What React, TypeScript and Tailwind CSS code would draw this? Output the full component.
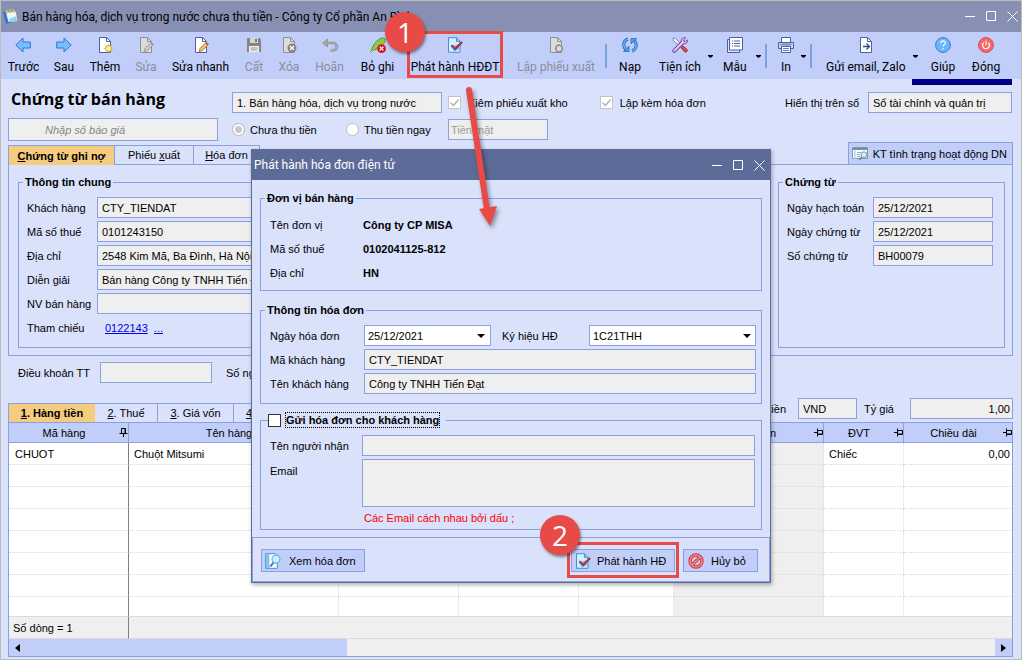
import type { ReactNode } from 'react';

const FIELD = 'h-[21px] rounded-none border border-[#8c9fdf] bg-[#efefef] px-1 text-black outline-none';
const LEGEND = 'ml-1 px-0.5 text-[11px] leading-4 font-bold';

function PageIcon({ muted, children }: { muted?: boolean; children?: ReactNode }) {
  return (
    <svg width="16" height="16" viewBox="0 0 16 16" fill="none" aria-hidden="true">
      <path
        d="M2.5.5h7l4 4v11h-11z"
        fill={muted ? '#dcdcdc' : '#fff'}
        stroke={muted ? '#8f8f8f' : '#4a5fa5'}
      />
      <path d="M9.5.5v4h4" stroke={muted ? '#8f8f8f' : '#4a5fa5'} />
      {children}
    </svg>
  );
}

function ArrowIcon({ flip }: { flip?: boolean }) {
  return (
    <svg width="16" height="16" viewBox="0 0 16 16" className={flip ? 'rotate-180' : ''} aria-hidden="true">
      <path d="M.8 8 8 1v4h7.3v6H8v4z" fill="#79bdff" stroke="#2a79d8" strokeLinejoin="round" />
    </svg>
  );
}

function AddIcon() {
  return (
    <PageIcon>
      <path d="M11.5 7.5v8M7.5 11.5h8M8.7 8.7l5.6 5.6M14.3 8.7l-5.6 5.6" stroke="#c79a1c" />
      <circle cx="11.5" cy="11.5" r="3" fill="#fff09a" stroke="#d5a51f" />
    </PageIcon>
  );
}

function EditIcon({ muted }: { muted?: boolean }) {
  return (
    <PageIcon muted={muted}>
      <path
        d="m6 14.8 1-3.3 6.2-6.2 2.2 2.2-6.2 6.2z"
        fill={muted ? '#c9c9c9' : '#f6c25b'}
        stroke={muted ? '#909090' : '#8f6a36'}
        strokeWidth=".8"
      />
      <path d="m12.3 6.2 1.1-1.1 2.2 2.2-1.1 1.1z" fill={muted ? '#999' : '#e0483e'} />
    </PageIcon>
  );
}

function SaveIcon() {
  return (
    <svg width="16" height="16" viewBox="0 0 16 16" aria-hidden="true">
      <path d="M1 1h12.5L15 2.5V15H1z" fill="#858585" />
      <path d="M4 1h8v5H4z" fill="#d6d6d6" />
      <path d="M9 2h2v3H9z" fill="#777" />
      <path d="M3 9h10v6H3z" fill="#efefef" />
      <path d="M4.5 11h7M4.5 13h7" stroke="#999" />
    </svg>
  );
}

function DeleteIcon() {
  return (
    <PageIcon muted>
      <circle cx="11" cy="11" r="4.5" fill="#858585" />
      <path d="m9 9 4 4M13 9l-4 4" stroke="#fff" strokeWidth="1.3" />
    </PageIcon>
  );
}

function UndoIcon() {
  return (
    <svg width="16" height="16" viewBox="0 0 16 16" fill="none" aria-hidden="true">
      <path d="M3.5 6H11a3.5 3.5 0 0 1 0 7.500H8.5" stroke="#8b8b8b" strokeWidth="2.6" />
      <path d="M3.5 6H11a3.5 3.5 0 0 1 0 7.500H8.5" stroke="#c4c4c4" strokeWidth=".8" />
      <path d="M5.5 2v8L.6 6z" fill="#a8a8a8" stroke="#8b8b8b" strokeWidth=".7" />
    </svg>
  );
}

function UnpostIcon() {
  return (
    <svg width="16" height="16" viewBox="0 0 16 16" aria-hidden="true">
      <path d="M.8 15 3 9.2C4.6 5.6 8 2 12.6.8l2.7 1.3c-.2 4-3.5 8.2-7.4 9.7L3 13.2z" fill="#8fd145" stroke="#4f9a1d" />
      <path d="M1 15 12.5 3" stroke="#4f9a1d" strokeWidth="1.8" />
      <path d="M1 15 12.5 3" stroke="#e9ffd0" strokeWidth=".8" />
      <circle cx="11.6" cy="11.6" r="4.4" fill="#dd1417" />
      <path d="m9.8 9.8 3.6 3.6M13.4 9.8l-3.6 3.6" stroke="#fff" strokeWidth="1.3" />
    </svg>
  );
}

function IssueIcon() {
  return (
    <svg width="16" height="16" viewBox="0 0 16 16" fill="none" aria-hidden="true">
      <path d="M1.5.7h8l3.5 3.6v11H1.5z" fill="#d3edff" stroke="#3b93d6" />
      <path d="M9.5.7v3.6H13" stroke="#3b93d6" fill="#8fc9f2" />
      <path d="M4 9.6 12 7v5l-5 3z" fill="#7fbdec" />
      <path d="m4.5 8.2 3.8 3.6L15 5" stroke="#8e2434" strokeWidth="2.2" />
      <path d="m5.2 8.4 3.1 2.8L14.300 5.200" stroke="#e8606c" strokeWidth=".8" />
    </svg>
  );
}

function StockIcon() {
  return (
    <PageIcon muted>
      <circle cx="11" cy="11.5" r="3.2" fill="#dcdcdc" stroke="#909090" strokeWidth="1.4" />
      <path d="M11 7v1.5M11 14.5V16M6.8 11.5h1.4M13.8 11.5h1.4" stroke="#909090" />
    </PageIcon>
  );
}

function ReloadIcon() {
  return (
    <svg width="16" height="16" viewBox="0 0 16 16" fill="none" aria-hidden="true">
      <path d="M6 2C1 3.5.5 10 4.5 13M10 14c5-1.5 5.5-8 1.5-11" stroke="#1f65c0" strokeWidth="3" />
      <path d="M6 2C1 3.5.5 10 4.5 13M10 14c5-1.5 5.5-8 1.5-11" stroke="#7dbcf7" strokeWidth="1.3" />
      <path d="M1.5 14.5H7V9zM14.5 1.5H9V7z" fill="#4d9cf0" stroke="#1f65c0" strokeWidth=".7" />
    </svg>
  );
}

function ToolsIcon() {
  return (
    <svg width="16" height="16" viewBox="0 0 16 16" fill="none" aria-hidden="true">
      <path d="M1 1.5 3 .8l6 6.400L7.500 8.700 1.300 3.500z" fill="#f1f2ff" stroke="#5a6fb4" strokeWidth=".8" />
      <path d="M2.300 13.800 11 5" stroke="#683d94" strokeWidth="4" strokeLinecap="round" />
      <path
        d="M13.500.8 11.400 3l.4 1.500 1.600.4 2-2.100c.8 2.600-1.500 4.700-3.900 3.700L9.400 4.800C8.500 2.300 11-.2 13.500.8z"
        fill="#e3d3f2"
        stroke="#683d94"
        strokeWidth=".9"
      />
      <path d="M2.300 13.800 11 5" stroke="#e3d3f2" strokeWidth="2" strokeLinecap="round" />
      <path d="m9 10.500 1.800-1.700 4.200 3.600c1 1.500-.8 3.500-2.400 2.500z" fill="#e34a50" stroke="#9b2030" strokeWidth=".9" />
    </svg>
  );
}

function TemplateIcon() {
  return (
    <svg width="16" height="16" viewBox="0 0 16 16" fill="none" aria-hidden="true">
      <path d="M.5 2.5h12v13H.5z" fill="#dbe3ff" stroke="#4a5fa5" />
      <path d="M2.5.5h13v12.5h-13z" fill="#fff" stroke="#4a5fa5" />
      <path d="M5 4h1M7 4h6M5 6.5h1M7 6.5h6M5 9h1M7 9h6" stroke="#4a5fa5" />
    </svg>
  );
}

function PrintIcon() {
  return (
    <svg width="16" height="16" viewBox="0 0 16 16" fill="none" aria-hidden="true">
      <path d="M3.5.5h9v5h-9z" fill="#fff" stroke="#4a5fa5" />
      <path d="M.5 5.5h15v6H.5z" fill="#cbd4fa" stroke="#4a5fa5" />
      <path d="M2.5 6.5h11v2h-11z" fill="#7d8dcc" />
      <path d="M3.5 9.5h9v6h-9z" fill="#fff" stroke="#4a5fa5" />
      <path d="M5 11.5h6M5 13.5h6" stroke="#6677b8" />
    </svg>
  );
}

function SendIcon() {
  return (
    <PageIcon>
      <path d="M5 9.5h6M8.5 6.5l3 3-3 3" stroke="#33498f" strokeWidth="1.3" />
    </PageIcon>
  );
}

function HelpIcon() {
  return (
    <svg width="16" height="16" viewBox="0 0 16 16" fill="none" aria-hidden="true">
      <circle cx="8" cy="8" r="7.4" fill="#6db4fb" stroke="#2e7fd8" />
      <path d="M5.8 6.2c0-3 4.6-3 4.6-.3 0 1.700-2.300 1.700-2.300 3.700M8.100 11v1.500" stroke="#fff" strokeWidth="1.2" />
    </svg>
  );
}

function PowerIcon() {
  return (
    <svg width="16" height="16" viewBox="0 0 16 16" fill="none" aria-hidden="true">
      <circle cx="8" cy="8" r="7.4" fill="#f8696b" stroke="#d9444a" />
      <path d="M5.7 5.7a3.4 3.4 0 1 0 4.6 0M8 3.8v4.400" stroke="#fff" strokeWidth="1.2" />
    </svg>
  );
}

function PreviewIcon() {
  return (
    <svg width="16" height="16" viewBox="0 0 16 16" fill="none" aria-hidden="true">
      <path d="M.7.7h9.600l2 2v12.600H.7z" fill="#fff" stroke="#3b93d6" />
      <path d="M1 1h3.5v14H1z" fill="#86c3ee" />
      <path d="m8.5 9.5-3.2 4" stroke="#7658a8" strokeWidth="2" />
      <circle cx="11" cy="6.2" r="4" fill="#c9f1fb" stroke="#64b6dd" strokeWidth="1.2" />
    </svg>
  );
}

function CancelIcon() {
  return (
    <svg width="16" height="16" viewBox="0 0 16 16" fill="none" aria-hidden="true">
      <circle cx="8" cy="8" r="6" stroke="#cf3438" strokeWidth="3.4" />
      <path d="m3.8 12.2 8.4-8.4" stroke="#cf3438" strokeWidth="3.2" />
      <circle cx="8" cy="8" r="6" stroke="#f2898b" strokeWidth="1.6" />
      <path d="m3.8 12.2 8.4-8.4" stroke="#f2898b" strokeWidth="1.4" />
    </svg>
  );
}

function StatusIcon() {
  return (
    <svg width="17" height="14" viewBox="0 0 17 14" fill="none" aria-hidden="true">
      <path d="M.5.5h15v11H.5z" fill="#fff" stroke="#8792a2" />
      <path d="M1 1h14v2H1z" fill="#6f93a4" />
      <path d="M2 3.5h2v8H2z" fill="#bfe0f5" />
      <path d="M5 5.5h4M5 7.5h3M5 9.5h3" stroke="#7db0d8" />
      <path d="m9.5 10-2 3" stroke="#8a8a8a" strokeWidth="2" />
      <circle cx="12" cy="7.8" r="3" fill="#cdeaf8" stroke="#6b9fc0" />
    </svg>
  );
}

function AppIcon() {
  return (
    <svg width="15" height="16" viewBox="0 0 15 16" aria-hidden="true">
      <path d="M0 3.5 10 2l2.500 10L3 15z" fill="#3873d6" />
      <path d="M3 3.500 12.500 2.500 14.500 12 5.500 13z" fill="#eef7ff" />
      <path d="m6 10 7-3 1.200 5-8 1z" fill="#8ed2f3" />
      <path d="M4 1v4M7 .5v4M10 .5v3.500" stroke="#e8c948" strokeWidth="1.5" />
    </svg>
  );
}

function Caret() {
  return (
    <svg width="8" height="4" viewBox="0 0 8 4" className="shrink-0" aria-hidden="true">
      <path d="M0 0h8L4 4z" fill="#000" />
    </svg>
  );
}

function SmallCaret() {
  return (
    <svg width="5" height="3" viewBox="0 0 5 3" className="mt-px shrink-0" aria-hidden="true">
      <path d="M0 0h5v1L2.500 3 0 1z" fill="#000" />
    </svg>
  );
}

function PinIcon({ upright }: { upright?: boolean }) {
  return (
    <svg width="9" height="9" viewBox="0 0 9 9" fill="none" className={upright ? '-rotate-90' : ''} aria-hidden="true">
      <path d="M0 4.5h3M3.5.5v8M3.5 2.5h5v4h-5M4 6h4" stroke="#000" />
    </svg>
  );
}

function WindowButtons() {
  return (
    <div className="ml-auto flex gap-[10px] text-white">
      <button type="button" aria-label="Thu nhỏ">
        <svg width="11" height="11" viewBox="0 0 11 11"><path d="M0 5.5h10" stroke="currentColor" /></svg>
      </button>
      <button type="button" aria-label="Phóng to">
        <svg width="11" height="11" viewBox="0 0 11 11" fill="none"><path d="M.5.5h9v9h-9z" stroke="currentColor" /></svg>
      </button>
      <button type="button" aria-label="Đóng cửa sổ">
        <svg width="11" height="11" viewBox="0 0 11 11"><path d="m.5.5 10 10M10.5.5l-10 10" stroke="currentColor" /></svg>
      </button>
    </div>
  );
}

interface ToolProps {
  icon: ReactNode;
  label: string;
  size: string;
  disabled?: boolean;
  menu?: boolean;
  children?: ReactNode;
}

function Tool({ icon, label, size, disabled, menu, children }: ToolProps) {
  return (
    <button
      type="button"
      disabled={disabled}
      className={`relative flex h-[47px] shrink-0 items-center disabled:text-[#8b8d9b] ${menu ? 'justify-between' : 'justify-center'} ${size}`}
    >
      <span className="flex flex-col items-center gap-1.5 whitespace-nowrap">
        {icon}
        <span className="leading-4">{label}</span>
      </span>
      {menu && <SmallCaret />}
      {children}
    </button>
  );
}

function Divider() {
  return <span className="h-6 w-0.5 shrink-0 bg-[#7ba3df]" />;
}

function Step({ n, place }: { n: number; place: string }) {
  return (
    <span
      className={`absolute flex size-10 items-center justify-center rounded-full bg-[#e84a48] font-['Open_Sans',sans-serif] text-[28px] leading-none text-white shadow-[1px_2px_3px_rgba(0,0,0,0.45)] ${place}`}
    >
      {n}
    </span>
  );
}

function Check({ label }: { label: string }) {
  return (
    <label className="flex items-center gap-[7px] whitespace-nowrap">
      <span className="relative flex">
        <input type="checkbox" defaultChecked disabled className="size-[13px] appearance-none border border-[#c4c4c4] bg-white" />
        <svg width="13" height="13" viewBox="0 0 13 13" fill="none" className="absolute inset-0">
          <path d="m2.5 6.5 3 3 5-6" stroke="#b0b0b0" strokeWidth="1.3" />
        </svg>
      </span>
      {label}
    </label>
  );
}

function Radio({ label, checked }: { label: string; checked?: boolean }) {
  return (
    <label className="flex items-center gap-[5px] whitespace-nowrap">
      <input
        type="radio"
        name="thanhToan"
        defaultChecked={checked}
        disabled
        className="size-[13px] appearance-none rounded-full border border-[#bdbdbd] bg-white checked:bg-[#c8c8c8] checked:shadow-[inset_0_0_0_2px_#fff]"
      />
      {label}
    </label>
  );
}

const thongTinChung = [
  ['Khách hàng', 'CTY_TIENDAT'],
  ['Mã số thuế', '0101243150'],
  ['Địa chỉ', '2548 Kim Mã, Ba Đình, Hà Nội'],
  ['Diễn giải', 'Bán hàng Công ty TNHH Tiến Đạt'],
  ['NV bán hàng', ''],
];

const chungTu = [
  ['Ngày hạch toán', '25/12/2021'],
  ['Ngày chứng từ', '25/12/2021'],
  ['Số chứng từ', 'BH00079'],
];

const donVi = [
  ['Tên đơn vị', 'Công ty CP MISA'],
  ['Mã số thuế', '0102041125-812'],
  ['Địa chỉ', 'HN'],
];

const cot = ['Mã hàng', 'Tên hàng', 'Kho', 'TK công nợ', 'TK DT', 'Số lượng tồn', 'ĐVT', 'Chiều dài'];
const dong = ['CHUOT', 'Chuột Mitsumi', '', '', '', '', 'Chiếc', '0,00'];

function cellClass(i: number, last: boolean) {
  return [
    'border-r p-0',
    i === 0 ? 'border-r-[#808080] px-1.5' : 'border-r-[#d9d9d9] [border-right-style:dotted] px-[5px]',
    i === 5 ? 'bg-[#efefef]' : 'bg-white',
    i === 7 ? 'border-r-0 pr-0.5 text-right' : '',
    last ? 'h-[19px]' : 'h-[22px] border-b border-b-[#d9d9d9] [border-bottom-style:dotted]',
  ].join(' ');
}

function Toolbar() {
  return (
    <div className="flex h-[47px] items-center bg-[#c1cef9] font-['Roboto',sans-serif] text-xs">
      <Tool icon={<ArrowIcon />} label="Trước" size="w-[45px]" />
      <Tool icon={<ArrowIcon flip />} label="Sau" size="w-9" />
      <Tool icon={<AddIcon />} label="Thêm" size="w-[46px]" />
      <Tool icon={<EditIcon muted />} label="Sửa" size="w-9" disabled />
      <Tool icon={<EditIcon />} label="Sửa nhanh" size="w-[73px]" />
      <Tool icon={<SaveIcon />} label="Cất" size="w-[34px]" disabled />
      <Tool icon={<DeleteIcon />} label="Xóa" size="w-9" disabled />
      <Tool icon={<UndoIcon />} label="Hoãn" size="w-[45px]" disabled />
      <Tool icon={<UnpostIcon />} label="Bỏ ghi" size="w-[51px]" />
      <Tool icon={<IssueIcon />} label="Phát hành HĐĐT" size="z-10 w-[104px]">
        <span className="absolute inset-x-1 -top-px bottom-px border-[3px] border-[#e84a48]" />
        <Step n={1} place="-left-[18px] -top-5" />
      </Tool>
      <Tool icon={<StockIcon />} label="Lập phiếu xuất" size="w-[98px]" disabled />
      <Divider />
      <Tool icon={<ReloadIcon />} label="Nạp" size="w-[46px]" />
      <Tool icon={<ToolsIcon />} label="Tiện ích" size="w-[66px] px-1.5" menu />
      <Tool icon={<TemplateIcon />} label="Mẫu" size="w-[46px] px-1" menu />
      <Divider />
      <Tool icon={<PrintIcon />} label="In" size="w-[43px] pl-[11px] pr-1" menu />
      <Divider />
      <Tool icon={<SendIcon />} label="Gửi email, Zalo" size="w-[114px] pl-[14px] pr-2" menu />
      <Tool icon={<HelpIcon />} label="Giúp" size="w-[34px]" />
      <Tool icon={<PowerIcon />} label="Đóng" size="w-[52px]" />
    </div>
  );
}

function InvoiceDialog() {
  return (
    <div
      role="dialog"
      aria-labelledby="dialogTitle"
      className="absolute inset-x-0 top-[148px] mx-auto w-[520px] border border-[#5d6b98] bg-[#d9e1fb] shadow-[1px_2px_4px_rgba(0,0,0,0.3)]"
    >
      <div className="flex h-[30px] items-center bg-[#5d6b98] pr-[5px] pl-0.5 text-white">
        <h2 id="dialogTitle" className="font-['Roboto',sans-serif] text-xs">Phát hành hóa đơn điện tử</h2>
        <WindowButtons />
      </div>

      <form className="px-2 pt-[10px]">
        <fieldset className="border border-[#8c9fdf] pb-[5px]">
          <legend className={LEGEND}>Đơn vị bán hàng</legend>
          <dl className="pt-[7px] pl-[9px]">
            {donVi.map(([label, value]) => (
              <div key={label} className="flex h-6 items-center">
                <dt className="w-[93px]">{label}</dt>
                <dd className="font-bold">{value}</dd>
              </div>
            ))}
          </dl>
        </fieldset>

        <fieldset className="mt-[11px] border border-[#8c9fdf] pr-[5px] pb-[9px] pl-[9px]">
          <legend className="-ml-[5px] px-0.5 text-[11px] leading-4 font-bold">Thông tin hóa đơn</legend>
          <div className="flex flex-col gap-[3px] pt-[7px]">
            <div className="flex items-center">
              <label htmlFor="ngayHoaDon" className="w-[94px]">Ngày hóa đơn</label>
              <div className="flex h-[21px] w-[127px] items-center border border-[#8c9fdf] bg-white pr-[5px]">
                <input id="ngayHoaDon" defaultValue="25/12/2021" className="w-0 flex-1 px-[3px] outline-none" />
                <button type="button" aria-label="Chọn ngày"><Caret /></button>
              </div>
              <label htmlFor="kyHieu" className="w-[98px] pl-[11px]">Ký hiệu HĐ</label>
              <div className="relative flex-1">
                <select id="kyHieu" className="h-[21px] w-full appearance-none border border-[#8c9fdf] bg-white px-[3px] outline-none">
                  <option>1C21THH</option>
                </select>
                <span className="pointer-events-none absolute inset-y-0 right-[5px] flex items-center"><Caret /></span>
              </div>
            </div>
            <div className="flex items-center">
              <label htmlFor="maKhachHang" className="w-[94px]">Mã khách hàng</label>
              <input id="maKhachHang" readOnly defaultValue="CTY_TIENDAT" className={`${FIELD} flex-1`} />
            </div>
            <div className="flex items-center">
              <label htmlFor="tenKhachHang" className="w-[94px]">Tên khách hàng</label>
              <input id="tenKhachHang" readOnly defaultValue="Công ty TNHH Tiến Đạt" className={`${FIELD} flex-1`} />
            </div>
          </div>
        </fieldset>

        <fieldset className="mt-2 mb-[7px] border border-[#8c9fdf] pr-[6px] pl-[9px]">
          <legend className="-ml-[2px] pr-1.5 text-[11px] leading-4 font-bold">
            <label className="flex h-4 items-center gap-1">
              <input type="checkbox" className="size-[13px] appearance-none border border-[#333] bg-white" />
              <span className="border border-dotted border-black leading-[14px]">Gửi hóa đơn cho khách hàng</span>
            </label>
          </legend>
          <div className="flex flex-col gap-[3px] pt-[7px]">
            <div className="flex items-center">
              <label htmlFor="nguoiNhan" className="w-[92px]">Tên người nhận</label>
              <input id="nguoiNhan" readOnly className={`${FIELD} flex-1`} />
            </div>
            <div className="flex items-start">
              <label htmlFor="email" className="w-[92px] leading-6">Email</label>
              <textarea id="email" readOnly className="h-12 flex-1 resize-none border border-[#8c9fdf] bg-[#efefef] p-1 outline-none" />
            </div>
          </div>
          <p className="pl-[94px] leading-[22px] text-[#ff0000]">Các Email cách nhau bởi dấu ;</p>
        </fieldset>
      </form>

      <div className="flex gap-2 border border-[#8c9fdf] pt-[11px] pr-[11px] pb-[9px] pl-2">
        <button type="button" className="mr-auto flex h-[23px] w-[104px] items-center gap-2 border border-[#8c9fdf] bg-[#c1cef9] pl-[3px]">
          <PreviewIcon />Xem hóa đơn
        </button>
        <button type="button" className="relative flex h-[23px] w-[104px] items-center gap-[6px] border border-[#8c9fdf] bg-[#c1cef9] pl-[3px]">
          <IssueIcon />Phát hành HĐ
          <span className="absolute -inset-x-[5px] -top-2 -bottom-[7px] border-[3px] border-[#e84a48]" />
          <Step n={2} place="-left-8 -top-[35px]" />
        </button>
        <button type="button" className="flex h-[23px] w-[75px] items-center gap-[7px] border border-[#8c9fdf] bg-[#c1cef9] pl-1">
          <CancelIcon />Hủy bỏ
        </button>
      </div>
    </div>
  );
}

export default function App() {
  return (
    <div className="relative min-h-screen w-full overflow-hidden border border-[#bcbcbc] bg-[#d9e1fb] font-['Liberation_Sans',Arial,sans-serif] text-[11px] leading-4 text-black">
      <header className="flex h-[31px] items-center gap-1 bg-[#8790b3] pr-[3px] pl-0.5">
        <AppIcon />
        <h1 className="font-['Roboto',sans-serif] text-xs">
          Bán hàng hóa, dịch vụ trong nước chưa thu tiền - Công ty Cổ phần An Bình
        </h1>
        <WindowButtons />
      </header>
      <Toolbar />

      <main className="pr-2 pl-[7px]">
        <div className="flex">
          <div className="mr-[14px] w-[210px]">
            <h2 className="flex h-10 items-center pl-[3px] font-['Open_Sans',sans-serif] text-base font-bold whitespace-nowrap">
              Chứng từ bán hàng
            </h2>
            <input
              aria-label="Số báo giá"
              placeholder="Nhập số báo giá"
              className="-mt-px h-[23px] w-full border border-[#8c9fdf] bg-[#efefef] pl-9 italic outline-none placeholder:text-[#858585]"
            />
          </div>
          <div className="grid grid-cols-[216px_auto] content-start gap-y-1.5 pt-[13px]">
            <select aria-label="Loại chứng từ" className={`${FIELD} w-[210px] appearance-none`}>
              <option>1. Bán hàng hóa, dịch vụ trong nước</option>
            </select>
            <div className="flex gap-8">
              <Check label="Kiêm phiếu xuất kho" />
              <Check label="Lập kèm hóa đơn" />
            </div>
            <div className="flex">
              <span className="flex w-[114px]"><Radio label="Chưa thu tiền" checked /></span>
              <Radio label="Thu tiền ngay" />
            </div>
            <input aria-label="Hình thức" disabled defaultValue="Tiền mặt" className="h-[21px] w-[100px] border border-[#8c9fdf] bg-[#efefef] px-0.5 text-[#9b9b9b]" />
          </div>
          <div className="mr-px ml-auto flex flex-col items-end">
            <span className="h-1.5 w-[100px] bg-[#00008b]" />
            <label className="mt-[7px] flex items-center gap-[9px] whitespace-nowrap">
              Hiển thị trên sổ
              <select className={`${FIELD} w-[144px] appearance-none`}>
                <option>Sổ tài chính và quản trị</option>
              </select>
            </label>
          </div>
        </div>

        <div className="mt-px flex h-[22px] items-end">
          <div role="tablist" className="flex">
            <button type="button" role="tab" aria-selected="true" className="-mb-px h-5 w-[106px] border-t border-l border-[#8c9fdf] bg-[#f5cb80] font-bold"><u>C</u>hứng từ ghi nợ</button>
            <button type="button" role="tab" className="h-[19px] w-[80px] border-x border-t border-[#8c9fdf]">Phiếu <u>x</u>uất</button>
            <button type="button" role="tab" className="h-[19px] w-[66px] border-t border-r border-[#8c9fdf]"><u>H</u>óa đơn</button>
          </div>
          <button type="button" className="-mb-px ml-auto flex h-[23px] items-center gap-1 border border-[#8c9fdf] bg-[#c1cef9] pr-[5px] pl-[3px]">
            <StatusIcon />
            KT tình trạng hoạt động DN
          </button>
        </div>

        <div className="flex gap-2 border border-[#8c9fdf] pt-[9px] pr-[7px] pb-[7px] pl-[9px]">
          <fieldset className="flex-1 border border-[#8c9fdf] pb-[9px]">
            <legend className={LEGEND}>Thông tin chung</legend>
            <div className="flex flex-col gap-[3px] px-2 pt-[7px]">
              {thongTinChung.map(([label, value], i) => (
                <div key={label} className="flex items-center">
                  <label htmlFor={`chung${i}`} className="w-[70px]">{label}</label>
                  <input id={`chung${i}`} readOnly defaultValue={value} className={`${FIELD} flex-1`} />
                </div>
              ))}
              <div className="flex h-[21px] items-center">
                <span className="w-[78px]">Tham chiếu</span>
                <a href="#tham-chieu" className="text-[#0000ee] underline">0122143</a>
                <a href="#them" className="ml-1.5 text-[#0000ee] underline">...</a>
              </div>
            </div>
          </fieldset>
          <fieldset className="w-[227px] border border-[#8c9fdf]">
            <legend className={LEGEND}>Chứng từ</legend>
            <div className="flex flex-col gap-[3px] pt-[7px] pl-2">
              {chungTu.map(([label, value], i) => (
                <div key={label} className="flex items-center">
                  <label htmlFor={`ct${i}`} className="w-[86px]">{label}</label>
                  <input id={`ct${i}`} readOnly defaultValue={value} className={`${FIELD} w-[120px]`} />
                </div>
              ))}
            </div>
          </fieldset>
        </div>

        <div className="mt-1.5 flex items-center pl-[10px]">
          <label htmlFor="dieuKhoan" className="w-[82px]">Điều khoản TT</label>
          <input id="dieuKhoan" readOnly className={`${FIELD} w-[112px]`} />
          <span className="ml-[14px]">Số ngày nợ</span>
        </div>

        <div className="mt-[15px] flex h-6">
          <div role="tablist" className="flex self-end">
            <button type="button" role="tab" aria-selected="true" className="h-[19px] w-[87px] border-t border-l border-[#8c9fdf] bg-[#f5cb80] font-bold"><u>1</u>. Hàng tiền</button>
            <button type="button" role="tab" className="h-[19px] w-[63px] border-t border-r border-[#8c9fdf]"><u>2</u>. Thuế</button>
            <button type="button" role="tab" className="h-[19px] w-[76px] border-t border-r border-[#8c9fdf]"><u>3</u>. Giá vốn</button>
            <button type="button" role="tab" className="h-[19px] w-[76px] border-t border-r border-[#8c9fdf] pl-3 text-left"><u>4</u>. Khác</button>
          </div>
          <div className="ml-auto flex h-[21px] items-center">
            <label htmlFor="loaiTien" className="mr-3">Loại tiền</label>
            <input id="loaiTien" readOnly defaultValue="VND" className={`${FIELD} w-[59px]`} />
            <label htmlFor="tyGia" className="w-[53px] pl-[7px]">Tỷ giá</label>
            <input id="tyGia" readOnly defaultValue="1,00" className={`${FIELD} w-[103px] pr-0.5 text-right`} />
          </div>
        </div>

        <div className="mb-0.5 border border-[#8c9fdf]">
          <table className="w-full table-fixed border-separate border-spacing-0">
            <colgroup>
              <col className="w-[120px]" />
              <col />
              <col className="w-[120px]" />
              <col className="w-[120px]" />
              <col className="w-[95px]" />
              <col className="w-[150px]" />
              <col className="w-[80px]" />
              <col className="w-[108px]" />
            </colgroup>
            <thead>
              <tr>
                {cot.map((name, i) => (
                  <th key={name} className={`h-5 border-b border-[#8c9fdf] bg-[#c1cef9] p-0 font-normal ${i < 7 ? 'border-r' : ''}`}>
                    <span className="flex items-center">
                      <span className="flex-1">{name}</span>
                      <PinIcon upright={i === 0} />
                    </span>
                  </th>
                ))}
              </tr>
            </thead>
            <tbody>
              {Array.from({ length: 8 }, (_, r) => (
                <tr key={r}>
                  {dong.map((value, i) => (
                    <td key={i} className={cellClass(i, r === 7)}>{r === 0 ? value : ''}</td>
                  ))}
                </tr>
              ))}
            </tbody>
            <tfoot>
              <tr className="bg-[#efefef]">
                <td className="h-[23px] border-y border-r border-y-[#dcdcdc] border-r-[#808080] p-0 pl-1">Số dòng = 1</td>
                <td colSpan={7} className="border-y border-[#dcdcdc]" />
              </tr>
            </tfoot>
          </table>
          <div className="flex h-[17px] bg-[#efefef]">
            <button type="button" aria-label="Cuộn trái" className="flex w-[17px] items-center justify-center bg-[#c1cef9]">
              <svg width="5" height="8" viewBox="0 0 5 8"><path d="M5 0v8L0 4z" /></svg>
            </button>
            <span className="w-[32%] bg-[#c1cef9]" />
            <button type="button" aria-label="Cuộn phải" className="ml-auto flex w-[17px] items-center justify-center bg-[#c1cef9]">
              <svg width="5" height="8" viewBox="0 0 5 8"><path d="M0 0v8l5-4z" /></svg>
            </button>
          </div>
        </div>
      </main>

      <InvoiceDialog />

      <svg
        width="40"
        height="150"
        viewBox="0 0 40 150"
        className="pointer-events-none absolute inset-x-0 top-[81px] mx-auto -translate-x-8 drop-shadow-[2px_3px_2px_rgba(0,0,0,0.4)]"
        aria-hidden="true"
      >
        <path d="m10 8 18 120" stroke="#e84a48" strokeWidth="6" strokeLinecap="round" />
        <path d="m20 127 18-3-7 20z" fill="#e84a48" />
      </svg>
    </div>
  );
}
